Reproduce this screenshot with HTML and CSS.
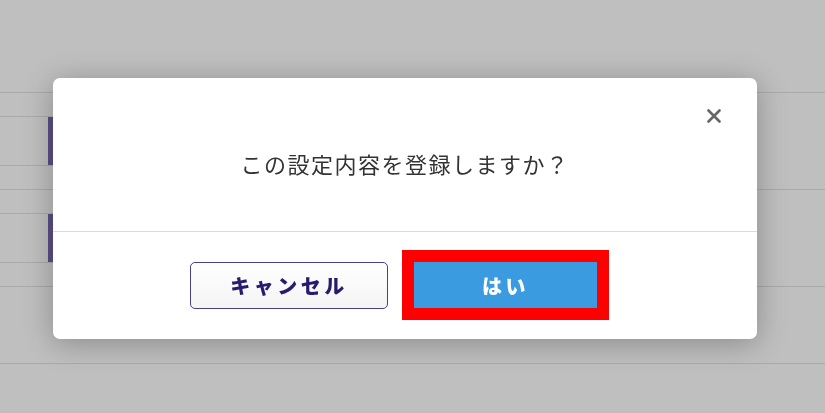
FILE: index.html
```html
<!DOCTYPE html>
<html lang="ja">
  <head>
    <meta charset="UTF-8" />
    <title>設定確認</title>
    <link rel="stylesheet" href="styles.css">
  </head>

  <body>
    <!-- 背景のフォーム（オーバーレイで暗くなっている） -->
    <div class="page">
      <div class="section">
        <div class="label-col">
          <div class="sub sub-head"></div>
          <div class="sub sub-input"><span class="bar"></span></div>
          <div class="sub sub-foot"></div>
        </div>
        <div class="value-col"></div>
      </div>
      <div class="section">
        <div class="label-col">
          <div class="sub sub-head"></div>
          <div class="sub sub-input"><span class="bar"></span></div>
          <div class="sub sub-foot"></div>
        </div>
        <div class="value-col"></div>
      </div>
      <div class="section section-last">
        <div class="label-col"></div>
        <div class="value-col"></div>
      </div>
    </div>

    <!-- 確認ダイアログ -->
    <div class="overlay">
      <div class="modal">
        <button class="close" aria-label="閉じる">
          <svg width="14" height="14" viewBox="0 0 14 14">
            <path d="M1.5 1.5 L12.5 12.5 M12.5 1.5 L1.5 12.5" stroke="#666" stroke-width="2.6" stroke-linecap="round"/>
          </svg>
        </button>
        <div class="modal-body">
          <p class="message">この設定内容を登録しますか？</p>
        </div>
        <div class="modal-footer">
          <button class="btn btn-cancel">キャンセル</button>
          <button class="btn btn-ok">はい</button>
        </div>
      </div>
    </div>
  </body>
</html>
```

FILE: styles.css
```css
* {
    box-sizing: border-box;
    margin: 0;
    padding: 0;
}
body {
    background-color: #bfbfbf;
    font-family: "Noto Sans CJK JP", "Noto Sans", sans-serif;
    width: 825px;
    height: 413px;
    overflow: hidden;
}

/* 背景 */
.page {
    padding-top: 92px;
}
.section {
    display: flex;
    border-top: 1px solid #aaaaaa;
    height: 97px;
}
.section-last {
    height: 78px;
    border-bottom: 1px solid #aaaaaa;
}
.label-col {
    width: 400px;
    display: flex;
    flex-direction: column;
}
.value-col {
    flex: 1;
}
.sub {
    border-bottom: 1px solid #aaaaaa;
}
.sub-head {
    height: 24px;
}
.sub-input {
    height: 49px;
    padding-left: 48px;
}
.sub-foot {
    height: 23px;
    border-bottom: none;
}
.bar {
    display: block;
    width: 5px;
    height: 100%;
    background-color: #5b5086;
}

/* ダイアログ */
.overlay {
    position: fixed;
    top: 0;
    left: 0;
    right: 0;
    bottom: 0;
    padding-top: 78px;
    padding-left: 53px;
}
.modal {
    position: relative;
    width: 704px;
    height: 261px;
    background-color: #fff;
    border-radius: 7px;
    box-shadow: 0 4px 30px rgba(0, 0, 0, 0.28);
    display: flex;
    flex-direction: column;
}
.close {
    position: absolute;
    top: 31px;
    right: 36px;
    width: 14px;
    height: 14px;
    border: none;
    background: none;
    display: flex;
}
.modal-body {
    height: 154px;
    padding-top: 70px;
    border-bottom: 1px solid #dcdcdc;
    text-align: center;
}
.message {
    font-size: 22px;
    line-height: 30px;
    letter-spacing: 1.5px;
    color: #333;
}
.modal-footer {
    display: flex;
    align-items: flex-start;
    padding-top: 30px;
    padding-left: 137px;
}
.btn {
    font-family: "Noto Sans CJK JP", "Noto Sans", sans-serif;
    font-size: 20px;
    font-weight: 900;
    letter-spacing: 3.5px;
    border-radius: 5px;
    display: flex;
    justify-content: center;
    align-items: center;
}
.btn-cancel {
    width: 198px;
    height: 47px;
    border: 1.5px solid #4b3d8f;
    background: linear-gradient(#ffffff, #f4f4f4);
    color: #261b6c;
}
.btn-ok {
    width: 183px;
    height: 46px;
    margin-left: 26px;
    border: none;
    border-radius: 0;
    background-color: #3a9be0;
    color: #fff;
    outline: 12px solid #ff0000; /* 強調枠 */
}
```
